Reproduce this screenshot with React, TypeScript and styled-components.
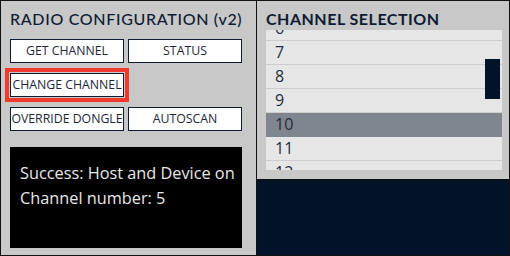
import React, { useLayoutEffect, useRef } from "react";
import styled, { createGlobalStyle } from "styled-components";

const Global = createGlobalStyle`
  html, body { margin: 0; padding: 0; background: #ffffff; }
  * { box-sizing: border-box; }
`;

const Frame = styled.div`
  width: 510px;
  height: 256px;
  border: 1px solid #111111;
  display: grid;
  grid-template-columns: 255px 1px 252px;
  background: #c8c8c8;
  overflow: hidden;
`;

const Divider = styled.div`
  background: #111111;
`;

const LeftPanel = styled.section`
  display: flex;
  flex-direction: column;
  padding: 8px 0 0 9px;
  background: #c8c8c8;
`;

const Title = styled.h1<{ $bold?: boolean }>`
  margin: 0;
  font-family: Lato, "Liberation Sans", sans-serif;
  font-size: 16px;
  font-weight: ${(p) => (p.$bold ? 700 : 500)};
  line-height: 19px;
  color: #0e1b33;
  letter-spacing: ${(p) => (p.$bold ? "0.5px" : "0.68px")};
  white-space: nowrap;
`;

const ButtonGrid = styled.div`
  display: grid;
  grid-template-columns: 114px 114px;
  grid-auto-rows: 24px;
  column-gap: 4px;
  row-gap: 10px;
  margin-top: 11px;
`;

const Button = styled.button<{ $active?: boolean }>`
  height: 24px;
  margin: 0;
  padding: 0;
  background: #ffffff;
  border: 1px solid #0e1b33;
  color: #1d2638;
  font-family: "Open Sans", "Noto Sans", sans-serif;
  font-size: 12.3px;
  line-height: 22px;
  white-space: nowrap;
  text-align: center;
  outline: ${(p) => (p.$active ? "4px solid #f03a2c" : "none")};
  outline-offset: 1px;
`;

const Console = styled.div`
  margin-top: 16px;
  width: 232px;
  height: 101px;
  background: #000000;
  color: #e8e8e8;
  font-family: "Open Sans", "Noto Sans", sans-serif;
  font-size: 16.3px;
  line-height: 25px;
  padding: 14px 0 0 10px;
  white-space: nowrap;
  overflow: hidden;
`;

const RightPanel = styled.section`
  display: flex;
  flex-direction: column;
`;

const SelectionArea = styled.div`
  height: 180px;
  background: #c8c8c8;
  padding: 8px 6px 0 9px;
  display: flex;
  flex-direction: column;
  border-bottom: 2px solid #0a0f18;
`;

const ListViewport = styled.div`
  position: relative;
  margin-top: 2px;
  height: 140px;
  width: 236px;
  background: #e6e6e6;
  overflow: hidden;
`;

const ListScroller = styled.div`
  height: 100%;
  overflow: hidden;
`;

const Row = styled.div<{ $selected?: boolean }>`
  height: 24px;
  border-bottom: 1px solid ${(p) => (p.$selected ? "#80868f" : "#cdcdcd")};
  background: ${(p) => (p.$selected ? "#80868f" : "#e6e6e6")};
  color: #252c3a;
  font-family: "Open Sans", "Noto Sans", sans-serif;
  font-size: 16px;
  line-height: 23px;
  padding-left: 9px;
`;

const Thumb = styled.div`
  position: absolute;
  right: 2px;
  top: 29px;
  width: 15px;
  height: 40px;
  background: #011329;
`;

const NavyArea = styled.div`
  flex: 1;
  background: #011229;
`;

const channels = Array.from({ length: 16 }, (_, i) => i + 1);

export default function App() {
  const scroller = useRef<HTMLDivElement>(null);
  useLayoutEffect(() => {
    if (scroller.current) scroller.current.scrollTop = 133;
  }, []);
  return (
    <>
      <Global />
      <Frame>
        <LeftPanel>
          <Title>RADIO CONFIGURATION (v2)</Title>
          <ButtonGrid>
            <Button>GET CHANNEL</Button>
            <Button>STATUS</Button>
            <Button $active>CHANGE CHANNEL</Button>
            <span />
            <Button>OVERRIDE DONGLE</Button>
            <Button>AUTOSCAN</Button>
          </ButtonGrid>
          <Console>
            Success: Host and Device on
            <br />
            Channel number: 5
          </Console>
        </LeftPanel>
        <Divider />
        <RightPanel>
          <SelectionArea>
            <Title $bold>CHANNEL SELECTION</Title>
            <ListViewport>
              <ListScroller ref={scroller}>
                {channels.map((c) => (
                  <Row key={c} $selected={c === 10}>
                    {c}
                  </Row>
                ))}
              </ListScroller>
              <Thumb />
            </ListViewport>
          </SelectionArea>
          <NavyArea />
        </RightPanel>
      </Frame>
    </>
  );
}
